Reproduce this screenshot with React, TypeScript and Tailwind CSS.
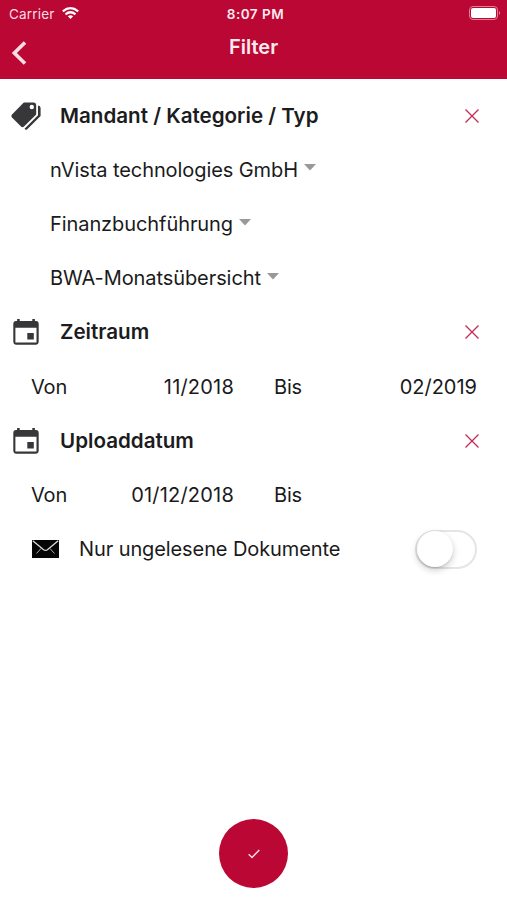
import React from "react";

function CloseIcon() {
  return (
    <svg width="14" height="14" viewBox="0 0 14 14" className="mr-[28px] shrink-0" fill="none" stroke="#c22c56" strokeWidth="1.3">
      <path d="M0.5 0.5 13.5 13.5M13.5 0.5 0.5 13.5" />
    </svg>
  );
}

function TagsIcon() {
  return (
    <svg width="31" height="30" viewBox="0 0 31 30" className="shrink-0">
      <path d="M12.8 1.6H22.5Q25.2 1.8 25.2 4.5V13.4L13 25.6Q11.5 26.8 10 25.5L1 16.6Q-.2 15.1 1 13.6Z" fill="#37373a" />
      <circle cx="20.8" cy="6" r="2.2" fill="#fff" />
      <path d="M27 4.6Q29.6 4.8 29.6 7V14.9L16 28.5Q14.5 29.5 13.5 27.8L27 14.2Z" fill="#37373a" />
    </svg>
  );
}

function CalendarIcon() {
  return (
    <svg width="26" height="26" viewBox="0 0 26 26" className="ml-[1.5px] shrink-0" fill="#37373a">
      <path d="M3 2H4.1V0H6.7V2H19.3V0H21.9V2H23Q25.7 2.2 25.7 5V23Q25.6 25.6 23 25.8H3Q.4 25.6.3 23V5Q.3 2.2 3 2ZM2.4 8.7V23.6H23.5V8.7Z" fillRule="evenodd" />
      <path d="M14.3 14H20.8V20.5H14.3Z" />
    </svg>
  );
}

function MailIcon() {
  return (
    <svg width="27" height="18" viewBox="0 0 27 18" className="shrink-0">
      <path d="M0 0H27V18H0Z" fill="#050505" />
      <path d="M.8 .8 11.6 9.7Q13.5 11 15.4 9.7L26.2 .8" fill="none" stroke="#ddd" strokeWidth="1.3" />
      <path d="M9 8.5 4.5 13.5M18 8.5 22.5 13.5" fill="none" stroke="#aaa" strokeWidth="1" />
    </svg>
  );
}

function SectionHeader({ icon, children }: { icon: React.ReactNode; children: React.ReactNode }) {
  return (
    <div className="flex h-[54.2px] items-center">
      <div className="flex w-[60px] shrink-0 pl-[11px]">{icon}</div>
      <h2 className="flex-1 text-[20.6px] font-semibold text-[#1c1c1e]">{children}</h2>
      <CloseIcon />
    </div>
  );
}

function SelectRow({ children }: { children: React.ReactNode }) {
  return (
    <button className="flex h-[54.2px] items-center gap-[6px] pl-[50px] text-left tracking-[-0.08px]">
      {children}
      <svg width="12" height="7" viewBox="0 0 12 7" className="-mt-[4px]">
        <path d="M0 0H12L6 6.5Z" fill="#999" />
      </svg>
    </button>
  );
}

function RangeRow({ from, to }: { from: string; to?: string }) {
  return (
    <div className="flex h-[54.2px] items-center pl-[31px] pr-[30px]">
      <span className="w-[60px] tracking-[-0.2px]">Von</span>
      <span className="w-[143px] text-right tracking-[0.2px]">{from}</span>
      <span className="w-[80px] pl-[40px] tracking-[-0.2px]">Bis</span>
      <span className="flex-1 text-right">{to}</span>
    </div>
  );
}

export default function App() {
  return (
    <div className="flex h-[900px] w-[507px] flex-col bg-white font-[Inter,sans-serif] text-[20px] leading-[26px] text-[#1a1a1c]">
      <header className="h-[79px] bg-[#ba0733] text-white">
        <div className="grid h-[27px] grid-cols-3 items-center pl-[8px] pr-[6px] text-[13.5px] leading-[16px]">
          <div className="flex items-center gap-[7px] pl-[1px] tracking-[0.2px] text-[#fbdce4]">
            <span>Carrier</span>
            <svg width="17" height="12" viewBox="0 0 17 12" className="-mt-[2px]" fill="none" stroke="#fff" strokeWidth="2.2">
              <path d="M.8 4.4Q8.5-2 16.2 4.4M3.5 7.3Q8.5 3.2 13.5 7.3" />
              <path d="M5.8 9.2Q8.5 7.1 11.2 9.2L8.5 12Z" fill="#fff" stroke="none" />
            </svg>
          </div>
          <span className="pl-[2px] text-center font-semibold tracking-[0.5px] text-[#fdeaf0]">8:07 PM</span>
          <svg width="32" height="14" viewBox="0 0 32 14" className="-mt-[1px] justify-self-end">
            <rect x=".5" y=".5" width="28" height="13" rx="3.5" fill="none" stroke="#dc7f98" />
            <rect x="2" y="2" width="25" height="10" rx="2" fill="#fff" />
            <path d="M30 5Q32 7 30 9Z" fill="#e391a6" />
          </svg>
        </div>
        <div className="grid h-[52px] grid-cols-3 px-[12px]">
          <svg width="15" height="24" viewBox="0 0 15 24" className="mt-[14px]" fill="none" stroke="#fbdce4" strokeWidth="3.6">
            <path d="M13 1.5 2.4 12 13 22.5" />
          </svg>
          <h1 className="mt-[7px] text-center text-[20px] font-semibold text-[#fdeaf0]">Filter</h1>
        </div>
      </header>
      <main className="flex flex-col pt-[9.6px]">
        <SectionHeader icon={<TagsIcon />}>Mandant / Kategorie / Typ</SectionHeader>
        <SelectRow>nVista technologies GmbH</SelectRow>
        <SelectRow>Finanzbuchführung</SelectRow>
        <SelectRow>BWA-Monatsübersicht</SelectRow>
        <SectionHeader icon={<CalendarIcon />}>Zeitraum</SectionHeader>
        <RangeRow from="11/2018" to="02/2019" />
        <SectionHeader icon={<CalendarIcon />}>Uploaddatum</SectionHeader>
        <RangeRow from="01/12/2018" />
        <div className="flex h-[54.2px] items-center pl-[32px] pr-[30px]">
          <MailIcon />
          <span className="flex-1 pl-[20px] tracking-[-0.1px]">Nur ungelesene Dokumente</span>
          <button className="flex h-[39px] w-[62px] items-center rounded-full border-2 border-[#e5e5e5] bg-white">
            <span className="size-[36px] shrink-0 rounded-full bg-white shadow-[0_3px_7px_rgba(0,0,0,0.2),0_1px_1px_rgba(0,0,0,0.12)]" />
          </button>
        </div>
      </main>
      <footer className="mt-auto flex justify-center pb-[12px]">
        <button className="flex size-[69px] items-center justify-center rounded-full bg-[#ba0733]">
          <svg width="12" height="10" viewBox="0 0 12 10" fill="none" stroke="#fbdce4" strokeWidth="1.5">
            <path d="M.7 5.3 4 8.5 11.3 1" />
          </svg>
        </button>
      </footer>
    </div>
  );
}
